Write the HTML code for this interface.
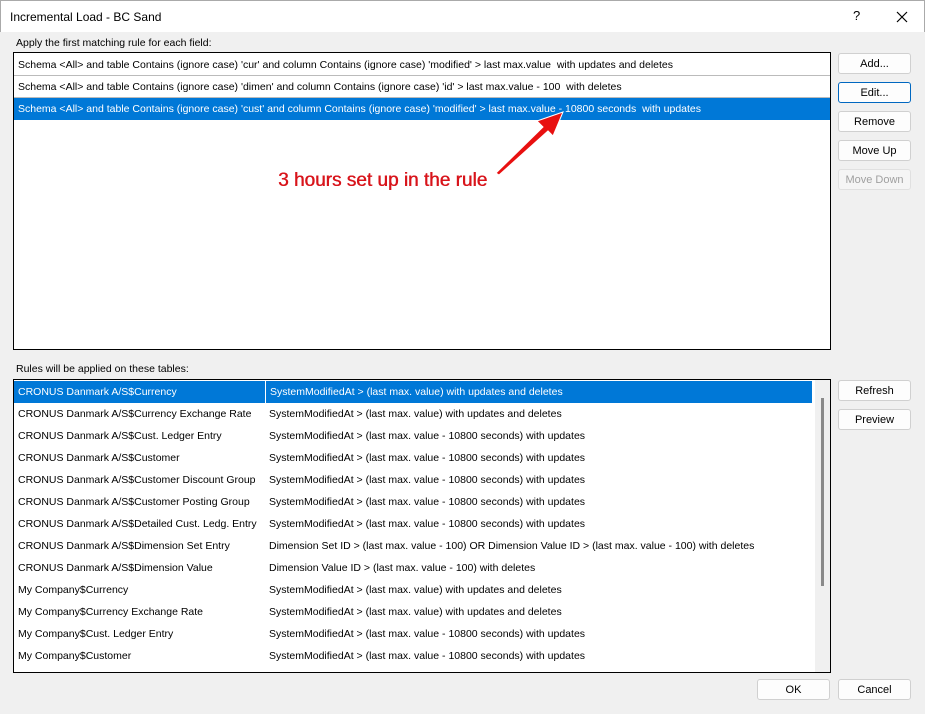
<!DOCTYPE html>
<html><head><style>
*{margin:0;padding:0;box-sizing:border-box}
body{width:925px;height:714px;background:#f0f0f0;font-family:"Liberation Sans",sans-serif;font-size:10.5px;color:#000;position:relative;overflow:hidden}
.title{position:absolute;left:0;top:0;width:925px;height:32px;background:#fff;border-top:1px solid #aaa;border-left:1px solid #aaa;border-right:1px solid #aaa}
.title span{position:absolute;top:9px;font-size:12px}
.abs{position:absolute}
.box{position:absolute;background:#fff;border:1px solid #000}
.row{position:absolute;left:0;height:22px;line-height:22px;white-space:nowrap;padding-left:4px}
.btn{position:absolute;width:73px;height:21px;background:#fdfdfd;border:1px solid #d0d0d0;border-radius:3px;text-align:center;line-height:20px;font-size:11px}
.sel{background:#0078d7;color:#fff}
.c2{position:absolute;left:255px}
</style></head><body>
<div class="title"><span style="left:9px">Incremental Load - BC Sand</span><span style="left:852px;font-size:13px;top:7px">?</span>
<svg class="abs" style="left:895px;top:10px" width="12" height="12"><path d="M1 1L11 11M11 1L1 11" stroke="#000" stroke-width="1.2"/></svg></div>
<div class="abs" style="left:16px;top:37px">Apply the first matching rule for each field:</div>
<div class="box" style="left:13px;top:52px;width:818px;height:298px">
<div class="row" style="top:1px;width:816px;border-bottom:1px solid #bbb">Schema &lt;All&gt; and table Contains (ignore case) 'cur' and column Contains (ignore case) 'modified' &gt; last max.value&nbsp; with updates and deletes</div>
<div class="row" style="top:23px;width:816px;border-bottom:1px solid #bbb">Schema &lt;All&gt; and table Contains (ignore case) 'dimen' and column Contains (ignore case) 'id' &gt; last max.value - 100&nbsp; with deletes</div>
<div class="row sel" style="top:45px;width:816px">Schema &lt;All&gt; and table Contains (ignore case) 'cust' and column Contains (ignore case) 'modified' &gt; last max.value - 10800 seconds&nbsp; with updates</div>
</div>
<svg class="abs" style="left:0;top:0" width="925" height="714">
<path d="M496 173 L543 127 L537 121 L563 112 L553 136 L548 131 L499 175 Z" fill="#e81010" stroke="#fff" stroke-width="1"/>
</svg>
<div class="abs" style="left:278px;top:170px;font-size:19px;color:#d8141b;text-shadow:0.5px 0 0 #d8141b,1px 1px 0 #fff,-1px -1px 0 #fff">3 hours set up in the rule</div>
<div class="btn" style="left:838px;top:53px">Add...</div>
<div class="btn" style="left:838px;top:82px;border-color:#0067c0">Edit...</div>
<div class="btn" style="left:838px;top:111px">Remove</div>
<div class="btn" style="left:838px;top:140px">Move Up</div>
<div class="btn" style="left:838px;top:169px;color:#a0a0a0;background:#f5f5f5;border-color:#e0e0e0">Move Down</div>
<div class="abs" style="left:16px;top:363px">Rules will be applied on these tables:</div>
<div class="box" style="left:13px;top:379px;width:818px;height:294px;overflow:hidden">
<div class="abs" style="left:801px;top:0;width:16px;height:292px;background:#f0f0f0"></div>
<div class="abs" style="left:807px;top:18px;width:3px;height:188px;background:#8a8a8a"></div>
<div class="row sel" style="top:1px;width:798px">CRONUS Danmark A/S$Currency<span class="c2" style="border-left:1px solid #fff;padding-left:4px;left:251px">SystemModifiedAt &gt; (last max. value) with updates and deletes</span></div>
<div class="row" style="top:23px">CRONUS Danmark A/S$Currency Exchange Rate<span class="c2">SystemModifiedAt &gt; (last max. value) with updates and deletes</span></div>
<div class="row" style="top:45px">CRONUS Danmark A/S$Cust. Ledger Entry<span class="c2">SystemModifiedAt &gt; (last max. value - 10800 seconds) with updates</span></div>
<div class="row" style="top:67px">CRONUS Danmark A/S$Customer<span class="c2">SystemModifiedAt &gt; (last max. value - 10800 seconds) with updates</span></div>
<div class="row" style="top:89px">CRONUS Danmark A/S$Customer Discount Group<span class="c2">SystemModifiedAt &gt; (last max. value - 10800 seconds) with updates</span></div>
<div class="row" style="top:111px">CRONUS Danmark A/S$Customer Posting Group<span class="c2">SystemModifiedAt &gt; (last max. value - 10800 seconds) with updates</span></div>
<div class="row" style="top:133px">CRONUS Danmark A/S$Detailed Cust. Ledg. Entry<span class="c2">SystemModifiedAt &gt; (last max. value - 10800 seconds) with updates</span></div>
<div class="row" style="top:155px">CRONUS Danmark A/S$Dimension Set Entry<span class="c2">Dimension Set ID &gt; (last max. value - 100) OR Dimension Value ID &gt; (last max. value - 100) with deletes</span></div>
<div class="row" style="top:177px">CRONUS Danmark A/S$Dimension Value<span class="c2">Dimension Value ID &gt; (last max. value - 100) with deletes</span></div>
<div class="row" style="top:199px">My Company$Currency<span class="c2">SystemModifiedAt &gt; (last max. value) with updates and deletes</span></div>
<div class="row" style="top:221px">My Company$Currency Exchange Rate<span class="c2">SystemModifiedAt &gt; (last max. value) with updates and deletes</span></div>
<div class="row" style="top:243px">My Company$Cust. Ledger Entry<span class="c2">SystemModifiedAt &gt; (last max. value - 10800 seconds) with updates</span></div>
<div class="row" style="top:265px">My Company$Customer<span class="c2">SystemModifiedAt &gt; (last max. value - 10800 seconds) with updates</span></div>
</div>
<div class="btn" style="left:838px;top:380px">Refresh</div>
<div class="btn" style="left:838px;top:409px">Preview</div>
<div class="btn" style="left:757px;top:679px">OK</div>
<div class="btn" style="left:838px;top:679px">Cancel</div>
</body></html>
